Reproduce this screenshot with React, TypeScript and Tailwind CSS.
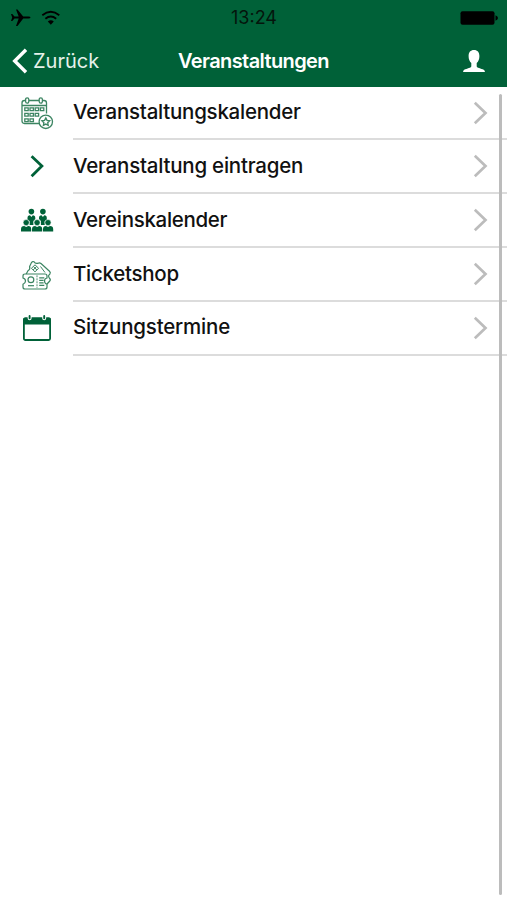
import type { ReactNode } from "react";

const GREEN = "#006138";

function EventCalendarIcon() {
  return (
    <svg width="34" height="34" viewBox="0 0 34 34" fill="none" stroke="#3c8562" strokeWidth="1.3">
      <path d="M22 27.5H4.5Q2 27.5 2 25V7Q2 4.500 4.500 4.500H5.500M9 4.500H19M22.500 4.500H24Q26.500 4.500 26.500 7V17.500M2 9.500H26.500" />
      <rect x="5.600" y="1.800" width="3.200" height="5.400" rx="1.600" />
      <rect x="19.200" y="1.800" width="3.200" height="5.400" rx="1.600" />
      <path d="M4.800 11.800h3.400v2.800H4.800zM10 11.800h3.400v2.800H10zM15.200 11.800h3.400v2.800h-3.400zM20.400 11.800h3.400v2.800h-3.400zM4.800 17.300h3.400v2.800H4.800zM10 17.300h3.400v2.800H10zM15.200 17.300h3.400v2.800h-3.400zM4.800 22.800h3.400v2.800H4.800zM10 22.800h3.400v2.800H10z" />
      <circle cx="25.800" cy="25.800" r="6.700" fill="white" />
      <path d="M25.800 21.900l1.200 2.500 2.700.4-2 1.900.5 2.700-2.400-1.300-2.400 1.300.5-2.700-2-1.900 2.700-.4z" />
    </svg>
  );
}

function ArrowIcon() {
  return (
    <svg width="34" height="34" viewBox="0 0 34 34" fill="none" stroke={GREEN} strokeWidth="2.800">
      <path d="M11.600 7.200L21.900 17L11.600 27.200" />
    </svg>
  );
}

function PeopleIcon() {
  return (
    <svg width="34" height="34" viewBox="0 0 34 34" fill={GREEN}>
      <circle cx="11.400" cy="8.600" r="2.800" />
      <circle cx="22.900" cy="8.600" r="2.800" />
      <path d="M7.500 17V15Q7.500 12.200 10 12.200L11.400 14L12.800 12.200Q15.300 12.200 15.300 15V16L13.400 18V22H9.600V18ZM19 16V15Q19 12.200 21.500 12.200L22.900 14L24.300 12.200Q26.800 12.200 26.800 15V17L24.700 18V22H20.900V18Z" />
      <g stroke="white" strokeWidth=".6">
        <circle cx="6.200" cy="19.600" r="3.100" />
        <circle cx="17.100" cy="19.600" r="3.100" />
        <circle cx="28" cy="19.600" r="3.100" />
      </g>
      <path d="M1 28.500V26.200Q1 23 4.200 23L6.200 24L8.200 23Q11.200 23 11.200 26.200V28.500ZM12 28.500V26.200Q12 23 15.100 23L17.100 24L19.100 23Q22.200 23 22.200 26.200V28.500ZM23 28.500V26.200Q23 23 26 23L28 24L30 23Q33.200 23 33.200 26.200V28.500Z" />
    </svg>
  );
}

function TicketIcon() {
  return (
    <svg width="34" height="34" viewBox="0 0 34 34" fill="none" stroke="#3c8562" strokeWidth="1.200">
      <path d="M5 17Q3 17 3 19V21Q5.500 21.800 5.500 24T3 27.200V30Q3 32 5 32H25Q27 32 27 30V27.200Q24.500 26.400 24.500 24T27 21V19Q27 17 25 17Z" />
      <path d="M6.200 17L8 13.800Q10.500 12.500 9.600 9.500L11.500 5.500Q12.500 4 14 4.800Q15.200 7 18.200 6.200Q19.500 5.400 21 6.500L29.500 14.200Q31 15.600 29.800 17.200Q27.600 18.600 29.400 21.200Q31 22.500 29.800 24L27 27" />
      <circle cx="10.900" cy="22.800" r="2.900" />
      <path d="M8 28.700H14" />
      <path d="M17 18.300V31" strokeDasharray="2 1" strokeWidth=".9" />
      <path d="M19.200 20.800H24.300M19.200 23.300H23.600M19.200 25.800H23.600M19.200 28.300H24.300" />
      <path d="M15 7.800L18.600 11.300L15 14.800L11.400 11.300ZM13.500 9.600L16.900 13M16.500 9.600L13.100 13M20.500 9.500L25 15.500" strokeWidth="1" />
    </svg>
  );
}

function CalendarIcon() {
  return (
    <svg width="34" height="34" viewBox="0 0 34 34">
      <rect x="3.900" y="7.500" width="26.200" height="21.500" rx="1.500" fill="white" stroke={GREEN} strokeWidth="1.800" />
      <path d="M3 13.500V8.500Q3 6.600 5 6.600H29Q31 6.600 31 8.500V13.500Z" fill={GREEN} />
      <path d="M9.600 5V7.300M24.200 5V7.300" stroke="white" strokeWidth="4" strokeLinecap="round" />
      <path d="M9.600 5V7.300M24.200 5V7.300" stroke={GREEN} strokeWidth="1.900" strokeLinecap="round" />
    </svg>
  );
}

const items: { label: string; icon: ReactNode; text: string }[] = [
  { label: "Veranstaltungskalender", icon: <EventCalendarIcon />, text: "tracking-[-0.25px]" },
  { label: "Veranstaltung eintragen", icon: <ArrowIcon />, text: "tracking-[-0.23px]" },
  { label: "Vereinskalender", icon: <PeopleIcon />, text: "tracking-[-0.31px]" },
  { label: "Ticketshop", icon: <TicketIcon />, text: "tracking-[-0.28px]" },
  { label: "Sitzungstermine", icon: <CalendarIcon />, text: "tracking-[-0.2px]" },
];

function StatusBar() {
  return (
    <div className="grid h-[35px] grid-cols-[1fr_auto_1fr] items-center pl-[10px] pr-[9px]">
      <div className="flex items-center gap-[10px]">
        <svg width="21" height="18" viewBox="0 0 21 18" fill="black">
          <path d="M20.500 8.500Q20.500 7.400 18.500 7.400H13.200L7.500.5H6L8.700 7.400H4.500L2.300 5H1L2.200 8.500L1 12H2.300L4.500 9.600H8.700L6 17H7.500L13.200 9.600H18.500Q20.500 9.600 20.500 8.500Z" />
        </svg>
        <svg width="20" height="16" viewBox="0 0 20 16" fill="none" stroke="black" strokeWidth="1.800">
          <path d="M1.300 5.200Q9.800-1.800 18.300 5.200M4.400 8.800Q9.800 4.300 15.200 8.800" />
          <path d="M6.800 11.500Q9.800 9 12.800 11.500L9.800 14.800Z" fill="black" stroke="none" />
        </svg>
      </div>
      <span className="text-[18px] leading-none text-[#04150c]">13:24</span>
      <svg className="justify-self-end" width="38" height="14" viewBox="0 0 38 14">
        <rect x=".5" y=".3" width="34" height="13.400" rx="2" fill="black" />
        <path d="M35.500 4.300Q38 5.200 38 7T35.500 9.700Z" fill="black" />
      </svg>
    </div>
  );
}

export default function App() {
  return (
    <div className="relative h-[900px] w-[507px] overflow-hidden bg-white font-['Inter',sans-serif]">
      <header className="h-[87px] bg-[#006138]">
        <StatusBar />
        <div className="grid h-[52px] grid-cols-[1fr_auto_1fr] items-center px-[12px] text-white">
          <div className="flex items-center gap-[5px]">
            <svg width="16" height="26" viewBox="0 0 16 26" fill="none" stroke="white" strokeWidth="3.400">
              <path d="M14 1.700L2.700 13L14 24.300" />
            </svg>
            <span className="text-[20px] leading-none text-[#e6f1ea]">Zurück</span>
          </div>
          <span className="text-[20px] font-semibold leading-none tracking-[-0.6px]">Veranstaltungen</span>
          <svg className="mr-[9px] justify-self-end" width="24" height="24" viewBox="0 0 24 24" fill="white">
            <path d="M12 1C8.500 1 6.600 3.300 6.600 7C6.600 10 7.500 12.500 9.300 14V17.500C8.500 19.500 3 19.500 1.500 21.500L1 23H23L22.500 21.500C21 19.500 15.500 19.500 14.700 17.500V14C16.500 12.500 17.400 10 17.400 7C17.400 3.300 15.500 1 12 1Z" />
          </svg>
        </div>
      </header>
      <ul className="-mt-[0.4px]">
        {items.map((item) => (
          <li key={item.label} className="flex h-[53.800px]">
            <div className="flex w-[73px] shrink-0 items-center pb-[2px] pl-[20px]">{item.icon}</div>
            <div className="flex grow items-center justify-between border-b-2 border-[#dcdcdc] pr-[19px]">
              <span className={"text-[20.500px] font-[450] leading-none text-[#111] " + item.text}>{item.label}</span>
              <svg width="15" height="24" viewBox="0 0 15 24" fill="none" stroke="#bcbcbc" strokeWidth="2.700">
                <path d="M1.800 1.800L12.500 12L1.800 22.200" />
              </svg>
            </div>
          </li>
        ))}
      </ul>
      {/* scroll indicator */}
      <div className="absolute right-[5px] top-[94px] h-[801px] w-[3.500px] rounded-full bg-[#bcbcbc]" />
    </div>
  );
}
